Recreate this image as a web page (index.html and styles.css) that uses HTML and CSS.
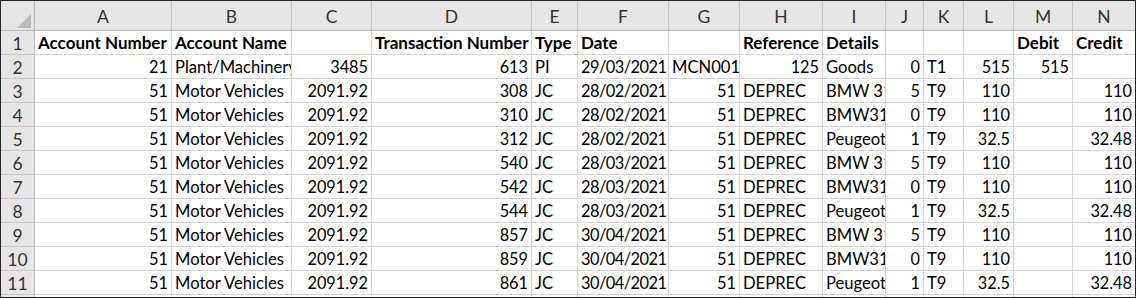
FILE: index.html
```html
<!DOCTYPE html>
<html>
<head>
<meta charset="utf-8">
<link rel="stylesheet" href="styles.css">
</head>
<body>
<div class="sheet">
  <div class="hd corner"><svg width="33" height="29" viewBox="0 0 33 29"><polygon points="30,13 30,27 16,27" fill="#b9b9b9"/></svg></div>
  <div class="hd col">A</div><div class="hd col">B</div><div class="hd col">C</div><div class="hd col">D</div><div class="hd col">E</div><div class="hd col">F</div><div class="hd col">G</div><div class="hd col">H</div><div class="hd col">I</div><div class="hd col">J</div><div class="hd col">K</div><div class="hd col">L</div><div class="hd col">M</div><div class="hd col last">N</div>

  <div class="rn">1</div>
  <div class="c b">Account Number</div><div class="c b">Account Name</div><div class="c"></div><div class="c b">Transaction Number</div><div class="c b">Type</div><div class="c b">Date</div><div class="c"></div><div class="c b">Reference</div><div class="c b">Details</div><div class="c"></div><div class="c"></div><div class="c"></div><div class="c b">Debit</div><div class="c b last">Credit</div>

  <div class="rn">2</div>
  <div class="c r">21</div><div class="c">Plant/Machinery</div><div class="c r">3485</div><div class="c r">613</div><div class="c">PI</div><div class="c d">29/03/2021</div><div class="c">MCN001</div><div class="c r">125</div><div class="c">Goods</div><div class="c r">0</div><div class="c">T1</div><div class="c r">515</div><div class="c r">515</div><div class="c last"></div>

  <div class="rn">3</div>
  <div class="c r">51</div><div class="c">Motor Vehicles</div><div class="c r">2091.92</div><div class="c r">308</div><div class="c">JC</div><div class="c d">28/02/2021</div><div class="c r">51</div><div class="c">DEPREC</div><div class="c">BMW 318</div><div class="c r">5</div><div class="c">T9</div><div class="c r">110</div><div class="c"></div><div class="c r last">110</div>

  <div class="rn">4</div>
  <div class="c r">51</div><div class="c">Motor Vehicles</div><div class="c r">2091.92</div><div class="c r">310</div><div class="c">JC</div><div class="c d">28/02/2021</div><div class="c r">51</div><div class="c">DEPREC</div><div class="c">BMW318</div><div class="c r">0</div><div class="c">T9</div><div class="c r">110</div><div class="c"></div><div class="c r last">110</div>

  <div class="rn">5</div>
  <div class="c r">51</div><div class="c">Motor Vehicles</div><div class="c r">2091.92</div><div class="c r">312</div><div class="c">JC</div><div class="c d">28/02/2021</div><div class="c r">51</div><div class="c">DEPREC</div><div class="c">Peugeot</div><div class="c r">1</div><div class="c">T9</div><div class="c r">32.5</div><div class="c"></div><div class="c r last">32.48</div>

  <div class="rn">6</div>
  <div class="c r">51</div><div class="c">Motor Vehicles</div><div class="c r">2091.92</div><div class="c r">540</div><div class="c">JC</div><div class="c d">28/03/2021</div><div class="c r">51</div><div class="c">DEPREC</div><div class="c">BMW 318</div><div class="c r">5</div><div class="c">T9</div><div class="c r">110</div><div class="c"></div><div class="c r last">110</div>

  <div class="rn">7</div>
  <div class="c r">51</div><div class="c">Motor Vehicles</div><div class="c r">2091.92</div><div class="c r">542</div><div class="c">JC</div><div class="c d">28/03/2021</div><div class="c r">51</div><div class="c">DEPREC</div><div class="c">BMW318</div><div class="c r">0</div><div class="c">T9</div><div class="c r">110</div><div class="c"></div><div class="c r last">110</div>

  <div class="rn">8</div>
  <div class="c r">51</div><div class="c">Motor Vehicles</div><div class="c r">2091.92</div><div class="c r">544</div><div class="c">JC</div><div class="c d">28/03/2021</div><div class="c r">51</div><div class="c">DEPREC</div><div class="c">Peugeot</div><div class="c r">1</div><div class="c">T9</div><div class="c r">32.5</div><div class="c"></div><div class="c r last">32.48</div>

  <div class="rn">9</div>
  <div class="c r">51</div><div class="c">Motor Vehicles</div><div class="c r">2091.92</div><div class="c r">857</div><div class="c">JC</div><div class="c d">30/04/2021</div><div class="c r">51</div><div class="c">DEPREC</div><div class="c">BMW 318</div><div class="c r">5</div><div class="c">T9</div><div class="c r">110</div><div class="c"></div><div class="c r last">110</div>

  <div class="rn">10</div>
  <div class="c r">51</div><div class="c">Motor Vehicles</div><div class="c r">2091.92</div><div class="c r">859</div><div class="c">JC</div><div class="c d">30/04/2021</div><div class="c r">51</div><div class="c">DEPREC</div><div class="c">BMW318</div><div class="c r">0</div><div class="c">T9</div><div class="c r">110</div><div class="c"></div><div class="c r last">110</div>

  <div class="rn">11</div>
  <div class="c r">51</div><div class="c">Motor Vehicles</div><div class="c r">2091.92</div><div class="c r">861</div><div class="c">JC</div><div class="c d">30/04/2021</div><div class="c r">51</div><div class="c">DEPREC</div><div class="c">Peugeot</div><div class="c r">1</div><div class="c">T9</div><div class="c r">32.5</div><div class="c"></div><div class="c r last">32.48</div>

  <div class="rn">12</div>
  <div class="c"></div><div class="c"></div><div class="c"></div><div class="c"></div><div class="c"></div><div class="c"></div><div class="c"></div><div class="c"></div><div class="c"></div><div class="c"></div><div class="c"></div><div class="c"></div><div class="c"></div><div class="c last"></div>
</div>
</body>
</html>
```

FILE: styles.css
```css
html, body {
  margin: 0;
  padding: 0;
  background: #ffffff;
}

.sheet {
  box-sizing: border-box;
  width: 1136px;
  height: 298px;
  overflow: hidden;
  border: 1px solid #262626;
  display: grid;
  grid-template-columns: 34px 137px 120px 80px 160px 46px 91px 71px 83px 63px 38px 40px 50px 59px 62px;
  grid-template-rows: 30px repeat(12, 24px);
  font-family: Lato, "Liberation Sans", sans-serif;
  font-size: 16.6px;
  color: #000;
}

.sheet > div {
  box-sizing: border-box;
  overflow: hidden;
  white-space: nowrap;
}

.hd {
  background: #e6e6e6;
  border-right: 1px solid #c6c6c6;
  border-bottom: 1px solid #b8b8b8;
  color: #333;
  font-size: 17.5px;
  display: flex;
  align-items: center;
  justify-content: center;
  padding-top: 1px;
}

.hd.last {
  border-right: none;
}

.corner {
  padding: 0 !important;
  border-right-color: #b8b8b8 !important;
}

.corner svg {
  display: block;
}

.rn {
  background: #e6e6e6;
  border-right: 1px solid #b8b8b8;
  border-bottom: 1px solid #c6c6c6;
  color: #333;
  font-size: 17.5px;
  display: flex;
  align-items: center;
  justify-content: center;
  padding-top: 1px;
}

.c {
  border-right: 1px solid #d4d4d4;
  border-bottom: 1px solid #d4d4d4;
  display: flex;
  align-items: center;
  padding: 0 3px 0 3px;
  line-height: 22px;
}

.c.last {
  border-right: none;
}

.c.r {
  justify-content: flex-end;
  font-size: 16.3px;
}

.c.d {
  font-size: 16.4px;
  letter-spacing: -0.55px;
}

.c.b {
  font-weight: bold;
  font-size: 17px;
}
```
